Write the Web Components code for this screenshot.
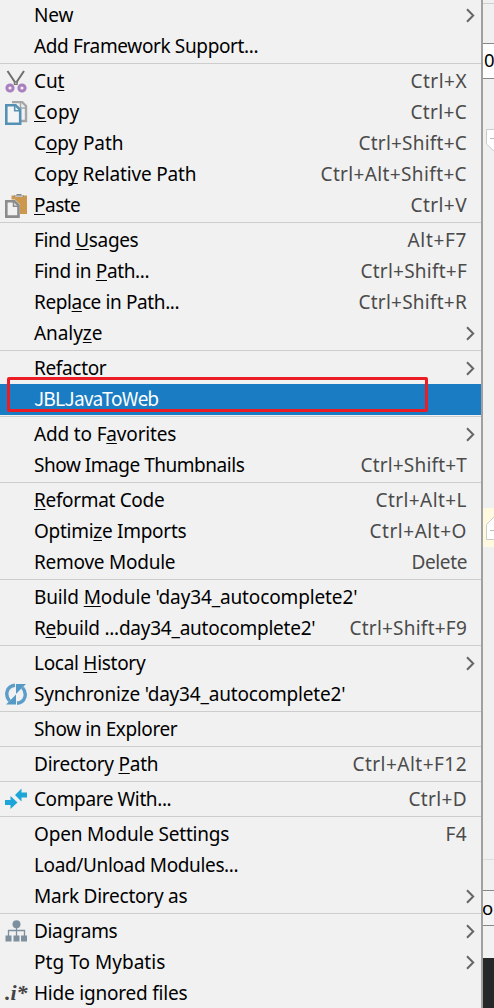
<!DOCTYPE html>
<html lang="en"><head><meta charset="utf-8"><title>Context menu</title>
<style>html,body{margin:0;height:1008px;overflow:hidden;background:#f0f0f0}body{font-family:"Noto Sans","Open Sans",sans-serif}</style></head><body>
<project-screen></project-screen>
<script>
const icons = {
cut:`<path d="M2.5 1 11.5 14.5M19 1 10 14.5" stroke="#6e6e6e" stroke-width="2" fill="none"/><circle cx="5" cy="18" r="3.1" fill="none" stroke="#a97fc0" stroke-width="3"/><circle cx="17" cy="18" r="3.1" fill="none" stroke="#a97fc0" stroke-width="3"/><path d="M8.8 11h4v4h-4z" fill="#777"/><path d="M10.2 12.4h1.2v1.4h-1.2z" fill="#ddd"/>`,
copy:`<path d="M7 1H17l4 4V20H16" fill="none" stroke="#a4a6a8" stroke-width="2.4"/><path d="M15.5 1v6h5.5" fill="none" stroke="#a4a6a8" stroke-width="1.5"/><path d="M1.3 4.2H10.5L15.2 8.9V22.7H1.3z" fill="#f4f4f4" stroke="#5591b4" stroke-width="2.6"/><path d="M9.7 4.5v5.3H15" fill="none" stroke="#5591b4" stroke-width="1.6"/>`,
paste:`<path d="M6.5 1.5H22V20H6.5z" fill="#cc984d"/><path d="M9 3V1.5h2.5V0h5v1.5H19V3z" fill="#888"/><path d="M10 2.2h8" stroke="#ddd"/><path d="M0 5.5h10l5 5V24H0z" fill="#f2f2f2"/><path d="M1.3 7.3H9.5l4 4V22.6H1.3z" fill="#f1f1f1" stroke="#8c8c8c" stroke-width="2.6"/><path d="M8.5 7v5.3h5" fill="none" stroke="#8c8c8c" stroke-width="1.5"/>`,
sync:`<path d="M10 2.2C1.5 3 -.5 12 4.5 18M12 20.3C20.5 19.5 22.5 10.5 17.5 4.5" fill="none" stroke="#5c9dca" stroke-width="3.4"/><path d="M11 1h10l-3.6 3.6L11 11z M11 21.5H1l3.6-3.6L11 11.5z" fill="#5599c4"/>`,
compare:`<path d="M0 12h5.5V8l7 6.5-7 6.5v-4H0z M22 4.5h-5.5V.5l-6.5 6.5 6.5 6.5v-4H22z" fill="#1ca5d8"/>`,
diagram:`<circle cx="11.5" cy="4.3" r="4" fill="#7e909e"/><path d="M11.5 7v9M3.5 16v-5.5h16V16" fill="none" stroke="#7e909e" stroke-width="1.3"/><path d="M.5 15.5h6v6h-6zM8.5 15.5h6v6h-6zM16 15.5h6v6h-6z" fill="#7e909e"/>`
};
class MenuIcon extends HTMLElement{connectedCallback(){
 const n=this.getAttribute('name');
 this.attachShadow({mode:'open'}).innerHTML=`<style>:host{display:block;height:24px;white-space:nowrap}svg{display:block}span{display:block;margin-top:-1px;font:italic bold 22px/24px "Liberation Serif",serif;color:#444}</style>`+(n==='ignore'?'<span>.i*</span>':`<svg width="23" height="24" viewBox="0 0 23 24">${icons[n]||''}</svg>`);
}}
class MenuSeparator extends HTMLElement{connectedCallback(){
 this.attachShadow({mode:'open'}).innerHTML=`<style>:host{display:block;height:4px;box-sizing:border-box;padding-top:1px}div{height:1px;background:#cdcdcd}</style><div></div>`;
}}
/* Text run whose tracking is tuned to fill a given advance width. */
class FitText extends HTMLElement{connectedCallback(){
 this.attachShadow({mode:'open'}).innerHTML=`<style>:host{display:block;white-space:nowrap}span{display:inline-block}::slotted(u){text-decoration:underline 1px;text-underline-offset:2px;text-decoration-skip-ink:none}</style><span><slot></slot></span>`;
 const s=this.shadowRoot.querySelector('span'),w=+this.getAttribute('width');
 s.style.letterSpacing=(w-s.getBoundingClientRect().width)/this.textContent.length+'px';
}}
class MenuEntry extends HTMLElement{connectedCallback(){
 const a=k=>this.getAttribute(k)||'';
 this.attachShadow({mode:'open'}).innerHTML=`<style>
:host{display:flex;align-items:center;height:31px;box-sizing:border-box;padding:0 14px 0 5px;font-size:19px;line-height:31px;color:#000}
:host([selected]){background:#1a7dc4;color:#fff;line-height:28px;font-family:"Noto Sans CJK SC","Noto Sans",sans-serif}
menu-icon{width:29px;flex:none}fit-text{height:31px}.key{margin-left:auto;color:#4b4b4b}svg{margin-left:auto;margin-right:-8px}
</style><menu-icon name="${a('icon')}"></menu-icon><fit-text width="${a('w')-.7}">${a('label').replace(/_\((.)\)/,'<u>$1</u>')}</fit-text>`+
 (a('key')?`<fit-text class="key" width="${a('kw')-.5}">${a('key')}</fit-text>`:'')+
 (this.hasAttribute('sub')?'<svg width="9" height="15" viewBox="0 0 9 15"><path d="M1 1.2 7.2 7.5 1 13.8" fill="none" stroke="#666" stroke-width="2"/></svg>':'');
}}
const rows=[
['New',40,'>'],['Add Framework Support...',225],0,
['Cu_(t)',31,'Ctrl+X',57,'cut'],['_(C)opy',46,'Ctrl+C',57,'copy'],['C_(o)py Path',90,'Ctrl+Shift+C',109],['Cop_(y) Relative Path',163,'Ctrl+Alt+Shift+C',147],['_(P)aste',47,'Ctrl+V',57,'paste'],0,
['Find _(U)sages',105,'Alt+F7',60],['Find in _(P)ath...',116,'Ctrl+Shift+F',107],['Repl_(a)ce in Path...',146,'Ctrl+Shift+R',109],['Analy_(z)e',69,'>'],0,
['_(R)efactor',73,'>'],['JBLJavaToWeb',125,'','','','selected'],0,
['Add to F_(a)vorites',143,'>'],['Show Image Thumbnails',211,'Ctrl+Shift+T',107],0,
['_(R)eformat Code',131,'Ctrl+Alt+L',92],['Optimi_(z)e Imports',153,'Ctrl+Alt+O',98],['Remove Module',142,'Delete',56],0,
["Build _(M)odule 'day34_autocomplete2'",324],["R_(e)build ...day34_autocomplete2'",282,'Ctrl+Shift+F9',118],0,
['Local _(H)istory',112,'>'],["Synchronize 'day34_autocomplete2'",312,'','','sync'],0,
['Show in Explorer',144],0,['Directory _(P)ath',125,'Ctrl+Alt+F12',115],0,['Compare With...',138,'Ctrl+D',59,'compare'],0,
['Open Module Settings',196,'F4',22],['Load/Unload Modules...',205],['Mark Directory as',154,'>'],0,
['Diagrams',84,'>','','diagram'],['Ptg To Mybatis',132,'>'],['Hide ignored files',154,'','','ignore']];
class ContextMenu extends HTMLElement{connectedCallback(){
 this.attachShadow({mode:'open'}).innerHTML='<style>:host{display:block;width:481px;height:1008px;overflow:hidden;background:#f1f1f1;border-right:2px solid #a0a0a0}</style>'+rows.map(r=>r?`<menu-entry label="${r[0]}" w="${r[1]}" ${r[2]==='>'?'sub':`key="${r[2]||''}" kw="${r[3]||''}"`} icon="${r[4]||''}" ${r[5]||''}></menu-entry>`:'<menu-separator></menu-separator>').join('');
}}
class EditorEdge extends HTMLElement{connectedCallback(){
 this.attachShadow({mode:'open'}).innerHTML=`<style>:host{display:flex;flex-direction:column;width:11px;height:1008px;overflow:hidden;background:#f0f0f0;font-size:18.5px}
div{box-sizing:border-box;flex:none;overflow:hidden;white-space:nowrap}svg{display:block}
.a{height:44px;border-bottom:1px solid #888;background:linear-gradient(#cfcfcf,#cfcfcf) 0 3px/100% 1px no-repeat}
.f{height:35px;background:#fff;border-bottom:1px solid #888;line-height:31px}
.g{height:50px}.h{height:379px}.y{height:39px;background:#fff9df}
.i{height:344px;border-bottom:1px solid #888;background:linear-gradient(#ddd,#ddd) 0 312px/100% 1px no-repeat}
.j{height:35px;border-bottom:1px solid #888;line-height:33px;background:#f4f4f4}.k{height:32px;background:#f2f2f2}.l{height:50px;background:#252729}
.f span{margin-left:1px}.j span{margin-left:-1px}</style>
<div class="a"></div><div class="f"><span>0</span></div><div class="g"></div>
<div class="h"><svg width="11" height="24"><path d="M12 .5H3.5V15l9 8.5" fill="#fff" stroke="#ccc"/><path d="M7 9.5h5" stroke="#bbb"/></svg></div>
<div class="y"><svg width="11" height="39"><path d="M12 8 3.5 16.5v15H12" fill="#fff" stroke="#ccc"/><path d="M7 22.5h5" stroke="#bbb"/></svg></div>
<div class="i"></div><div class="j"><span>o</span></div><div class="k"></div><div class="l"></div>`;
}}
class ProjectScreen extends HTMLElement{connectedCallback(){
 this.attachShadow({mode:'open'}).innerHTML=`<style>:host{display:flex;position:relative;width:494px;height:1008px;overflow:hidden}
.mark{position:absolute;left:7px;top:377px;width:421px;height:35px;box-sizing:border-box;border:3px solid #ec1c24;border-radius:2px}</style><context-menu></context-menu><editor-edge></editor-edge><div class="mark"></div>`;
}}
customElements.define('menu-icon',MenuIcon);customElements.define('menu-separator',MenuSeparator);customElements.define('fit-text',FitText);customElements.define('menu-entry',MenuEntry);customElements.define('context-menu',ContextMenu);customElements.define('editor-edge',EditorEdge);customElements.define('project-screen',ProjectScreen);
</script></body></html>
